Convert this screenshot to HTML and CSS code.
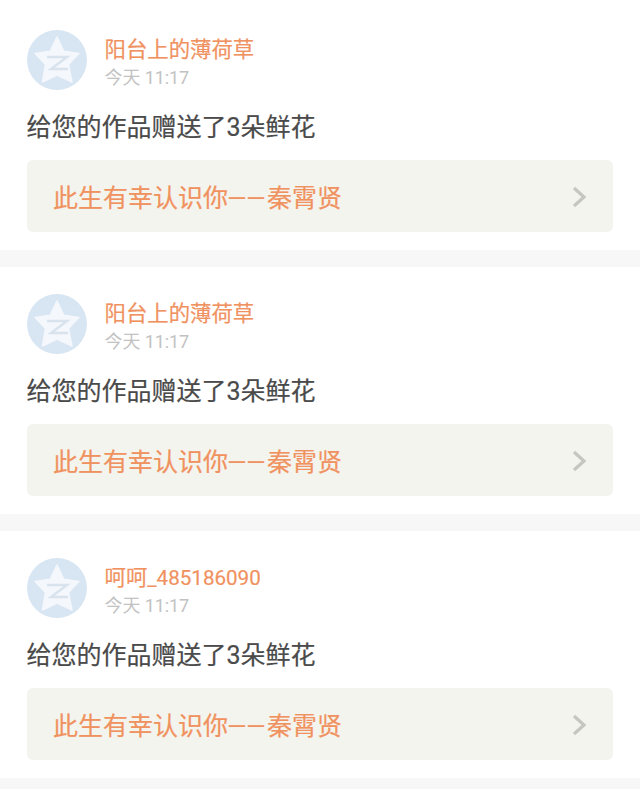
FILE: index.html

```html
<!DOCTYPE html>
<html lang="zh-CN">
<head>
    <meta charset="UTF-8">
    <meta name="viewport" content="width=device-width, initial-scale=1.0">
    <title>消息</title>
    <link rel="stylesheet" href="styles.css">
</head>
<body>
    <svg class="defs" width="0" height="0">
        <symbol id="avatar" viewBox="0 0 60 60">
            <circle cx="30" cy="30" r="30" fill="#d8e5f3"/>
            <path d="M30 7 L36.8 21.2 L52 23.4 L41.5 34.4 L45 52 L30 45 L15.5 52 L18.5 34.4 L8 23.4 L23.2 21.2 Z" fill="#f4f7fb" stroke="#f4f7fb" stroke-width="1.5" stroke-linejoin="round"/>
            <path d="M20 27 H40 L24 39 H41" fill="none" stroke="#d9e3ee" stroke-width="2.4"/>
        </symbol>
        <symbol id="chevron" viewBox="0 0 15 22">
            <path d="M2 2 L12 11 L2 20" fill="none" stroke="#c6c6c0" stroke-width="3.2"/>
        </symbol>
    </svg>

    <div class="card">
        <div class="user">
            <svg class="avatar"><use href="#avatar"/></svg>
            <div class="user-info">
                <div class="name">阳台上的薄荷草</div>
                <div class="time">今天 11:17</div>
            </div>
        </div>
        <div class="message">给您的作品赠送了3朵鲜花</div>
        <div class="work">
            <span>此生有幸认识你<span class="dash">——</span>秦霄贤</span>
            <svg class="chevron"><use href="#chevron"/></svg>
        </div>
    </div>

    <div class="card">
        <div class="user">
            <svg class="avatar"><use href="#avatar"/></svg>
            <div class="user-info">
                <div class="name">阳台上的薄荷草</div>
                <div class="time">今天 11:17</div>
            </div>
        </div>
        <div class="message">给您的作品赠送了3朵鲜花</div>
        <div class="work">
            <span>此生有幸认识你<span class="dash">——</span>秦霄贤</span>
            <svg class="chevron"><use href="#chevron"/></svg>
        </div>
    </div>

    <div class="card">
        <div class="user">
            <svg class="avatar"><use href="#avatar"/></svg>
            <div class="user-info">
                <div class="name">呵呵<span class="name-latin">_485186090</span></div>
                <div class="time">今天 11:17</div>
            </div>
        </div>
        <div class="message">给您的作品赠送了3朵鲜花</div>
        <div class="work">
            <span>此生有幸认识你<span class="dash">——</span>秦霄贤</span>
            <svg class="chevron"><use href="#chevron"/></svg>
        </div>
    </div>
</body>
</html>
```

FILE: styles.css

```css
body {
    font-family: Roboto, 'Noto Sans CJK SC', sans-serif;
    background-color: #ffffff;
    margin: 0;
    padding: 3px 0 0;
}
.defs {
    display: block;
    height: 0;
}
.card {
    background-color: #ffffff;
    padding: 27px 27px 18px 26.5px;
    height: 202px;
    border-bottom: 17px solid #f7f7f7;
}
.user {
    display: flex;
    align-items: center;
    height: 60px;
}
.avatar {
    width: 60px;
    height: 60px;
    flex-shrink: 0;
}
.user-info {
    margin-left: 18px;
    padding-top: 5px;
}
.name {
    color: #f0925f;
    font-size: 21.4px;
    line-height: 30px;
    -webkit-text-stroke: 0.2px #f0925f;
}
.name-latin {
    font-size: 20.6px;
}
.time {
    color: #c2c2c2;
    font-size: 18px;
    line-height: 26px;
    letter-spacing: -0.1px;
}
.message {
    color: #4a4a4a;
    font-size: 25px;
    line-height: 36px;
    margin-top: 20px;
    -webkit-text-stroke: 0.2px #4a4a4a;
}
.work {
    background-color: #f4f4ee;
    border-radius: 6px;
    height: 72px;
    margin-top: 14px;
    padding: 0 26px 0 26.5px;
    display: flex;
    justify-content: space-between;
    align-items: center;
    color: #f0925f;
    font-size: 25px;
    -webkit-text-stroke: 0.2px #f0925f;
}
.dash {
    font-family: 'Liberation Sans', sans-serif;
    font-size: 16px;
    font-weight: bold;
    letter-spacing: 3px;
    margin: 0 0 0 1px;
    position: relative;
    top: -4px;
}
.chevron {
    width: 15px;
    height: 22px;
    margin-top: 1px;
}
```
